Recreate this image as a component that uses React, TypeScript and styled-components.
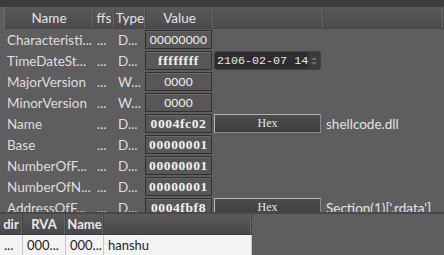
import styled, { createGlobalStyle } from "styled-components";

const GlobalStyle = createGlobalStyle`
  html, body {
    margin: 0;
    padding: 0;
    background: #5e5e5e;
    overflow: hidden;
  }
  body {
    font-family: Lato, "Noto Sans", sans-serif;
  }
`;

type Field = {
  name: string;
  ffs: string;
  type: string;
  value: string;
  bold?: boolean;
  extra?: "date" | "hex";
  note?: string;
};

const fields: Field[] = [
  { name: "Characteristi...", ffs: "...", type: "D...", value: "00000000" },
  { name: "TimeDateSt...", ffs: "...", type: "D...", value: "ffffffff", bold: true, extra: "date" },
  { name: "MajorVersion", ffs: "...", type: "W...", value: "0000" },
  { name: "MinorVersion", ffs: "...", type: "W...", value: "0000" },
  { name: "Name", ffs: "...", type: "D...", value: "0004fc02", bold: true, extra: "hex", note: "shellcode.dll" },
  { name: "Base", ffs: "...", type: "D...", value: "00000001", bold: true },
  { name: "NumberOfF...", ffs: "...", type: "D...", value: "00000001", bold: true },
  { name: "NumberOfN...", ffs: "...", type: "D...", value: "00000001", bold: true },
  { name: "AddressOfF...", ffs: "...", type: "D...", value: "0004fbf8", bold: true, extra: "hex", note: "Section(1)['.rdata']" },
];

const COLS = "89px 21px 31px 68px 110px 1fr";

export default function App() {
  return (
    <Page>
      <GlobalStyle />
      <TopStrip />
      <Header>
        <HeadCell>Name</HeadCell>
        <HeadCell>ffs</HeadCell>
        <HeadCell>Type</HeadCell>
        <HeadCell>Value</HeadCell>
        <HeadCell />
        <HeadCell />
      </Header>
      <Rows>
        {fields.map((f) => (
          <Row key={f.name}>
            <NameCell>{f.name}</NameCell>
            <DimCell>{f.ffs}</DimCell>
            <DimCell>{f.type}</DimCell>
            <ValueBox $bold={f.bold}>{f.value}</ValueBox>
            <ExtraCell>
              {f.extra === "date" && (
                <DateBox>
                  <DateText>2106-02-07 14:22:15</DateText>
                  <Spinner>
                    <svg width="8" height="12" viewBox="0 0 8 12">
                      <path d="M1 5 L4 2 L7 5 Z" fill="#6a6a6a" />
                      <path d="M1 7 L4 10 L7 7 Z" fill="#6a6a6a" />
                    </svg>
                  </Spinner>
                </DateBox>
              )}
              {f.extra === "hex" && <HexButton>Hex</HexButton>}
            </ExtraCell>
            <NoteCell>{f.note}</NoteCell>
          </Row>
        ))}
      </Rows>
      <Splitter />
      <BottomPane>
        <SubTable>
          <SubHeader>
            <SubHead>dir</SubHead>
            <SubHead>RVA</SubHead>
            <SubHead>Name</SubHead>
            <SubHead />
          </SubHeader>
          <SubRow>
            <SubCell>...</SubCell>
            <SubCell>000...</SubCell>
            <SubCell>000...</SubCell>
            <SubCell>hanshu</SubCell>
          </SubRow>
        </SubTable>
      </BottomPane>
    </Page>
  );
}

const Page = styled.div`
  width: 444px;
  height: 255px;
  display: flex;
  flex-direction: column;
  background: #5e5e5e;
  overflow: hidden;
`;

const TopStrip = styled.div`
  height: 7px;
  background: #3d3d3d;
  flex-shrink: 0;
`;

const Header = styled.div`
  display: grid;
  grid-template-columns: ${COLS};
  height: 22px;
  margin-left: 4px;
  flex-shrink: 0;
  background: linear-gradient(#5a5a5a 0%, #535353 45%, #4a4a4a 100%);
  border-left: 1px solid #6e6e6e;
  border-bottom: 1px solid #444;
  box-sizing: border-box;
`;

const HeadCell = styled.div`
  display: flex;
  align-items: center;
  justify-content: center;
  font-size: 13.5px;
  color: #e4e4e4;
  border-right: 1px solid #474747;
  box-shadow: inset -1px 0 0 #666;
  white-space: nowrap;
  overflow: hidden;
`;

const Rows = styled.div`
  flex: 1;
  overflow: hidden;
  padding-left: 4px;
`;

const Row = styled.div`
  display: grid;
  grid-template-columns: ${COLS};
  height: 21px;
  align-items: center;
  color: #dedede;
  font-size: 13.5px;
`;

const NameCell = styled.div`
  padding-left: 3px;
  white-space: nowrap;
  overflow: hidden;
`;

const DimCell = styled.div`
  padding-left: 4px;
  white-space: nowrap;
  overflow: hidden;
`;

const ValueBox = styled.div<{ $bold?: boolean }>`
  height: 19px;
  margin-right: 1px;
  box-sizing: border-box;
  display: flex;
  align-items: center;
  justify-content: center;
  background: #575757;
  border: 1px solid #303030;
  box-shadow: inset 0 1px 0 #6a6a6a;
  color: #f2f2f2;
  font-family: ${(p) => (p.$bold ? '"Liberation Serif", serif' : 'Lato, sans-serif')};
  font-weight: ${(p) => (p.$bold ? 700 : 400)};
  font-size: ${(p) => (p.$bold ? "13.5px" : "12px")};
  letter-spacing: ${(p) => (p.$bold ? "0.6px" : "0.2px")};
`;

const ExtraCell = styled.div`
  padding-left: 1px;
  padding-right: 2px;
  height: 19px;
`;

const DateBox = styled.div`
  height: 19px;
  box-sizing: border-box;
  display: flex;
  align-items: center;
  background: #2d2d2d;
  border: 1px solid #404040;
  border-radius: 3px;
  overflow: hidden;
`;

const DateText = styled.div`
  flex: 1;
  padding-left: 2px;
  font-family: "Liberation Mono", monospace;
  font-size: 11.7px;
  color: #e8e8e8;
  white-space: nowrap;
  overflow: hidden;
`;

const Spinner = styled.div`
  width: 12px;
  height: 100%;
  display: flex;
  align-items: center;
  justify-content: center;
  background: #3a3a3a;
`;

const HexButton = styled.div`
  height: 19px;
  box-sizing: border-box;
  display: flex;
  align-items: center;
  justify-content: center;
  border: 1px solid #b4b4b4;
  border-right-color: #8a8a8a;
  border-bottom-color: #8a8a8a;
  background: linear-gradient(#4c4c4c, #3e3e3e);
  font-family: "Liberation Serif", serif;
  font-size: 12px;
  color: #e6e6e6;
`;

const NoteCell = styled.div`
  padding-left: 3px;
  white-space: nowrap;
  overflow: hidden;
  color: #e4e4e4;
`;

const Splitter = styled.div`
  height: 2px;
  flex-shrink: 0;
  background: #474747;
`;

const BottomPane = styled.div`
  height: 41px;
  flex-shrink: 0;
  display: flex;
`;

const SubTable = styled.div`
  width: 252px;
  display: flex;
  flex-direction: column;
`;

const SubHeader = styled.div`
  display: grid;
  grid-template-columns: 23px 43px 38px 1fr;
  height: 20px;
  background: linear-gradient(#5a5a5a 0%, #515151 50%, #474747 100%);
  border-bottom: 1px solid #3e3e3e;
`;

const SubHead = styled.div`
  display: flex;
  align-items: center;
  justify-content: center;
  font-size: 13px;
  font-weight: 700;
  color: #e8e8e8;
  border-right: 1px solid #444;
  box-shadow: inset -1px 0 0 #666;
  white-space: nowrap;
  overflow: hidden;
`;

const SubRow = styled.div`
  flex: 1;
  display: grid;
  grid-template-columns: 23px 43px 38px 1fr;
  background: #f3f3f3;
  align-items: center;
`;

const SubCell = styled.div`
  height: 100%;
  display: flex;
  align-items: center;
  padding-left: 4px;
  font-size: 13px;
  color: #1e1e1e;
  border-right: 1px solid #c8c8c8;
  white-space: nowrap;
  overflow: hidden;
`;
